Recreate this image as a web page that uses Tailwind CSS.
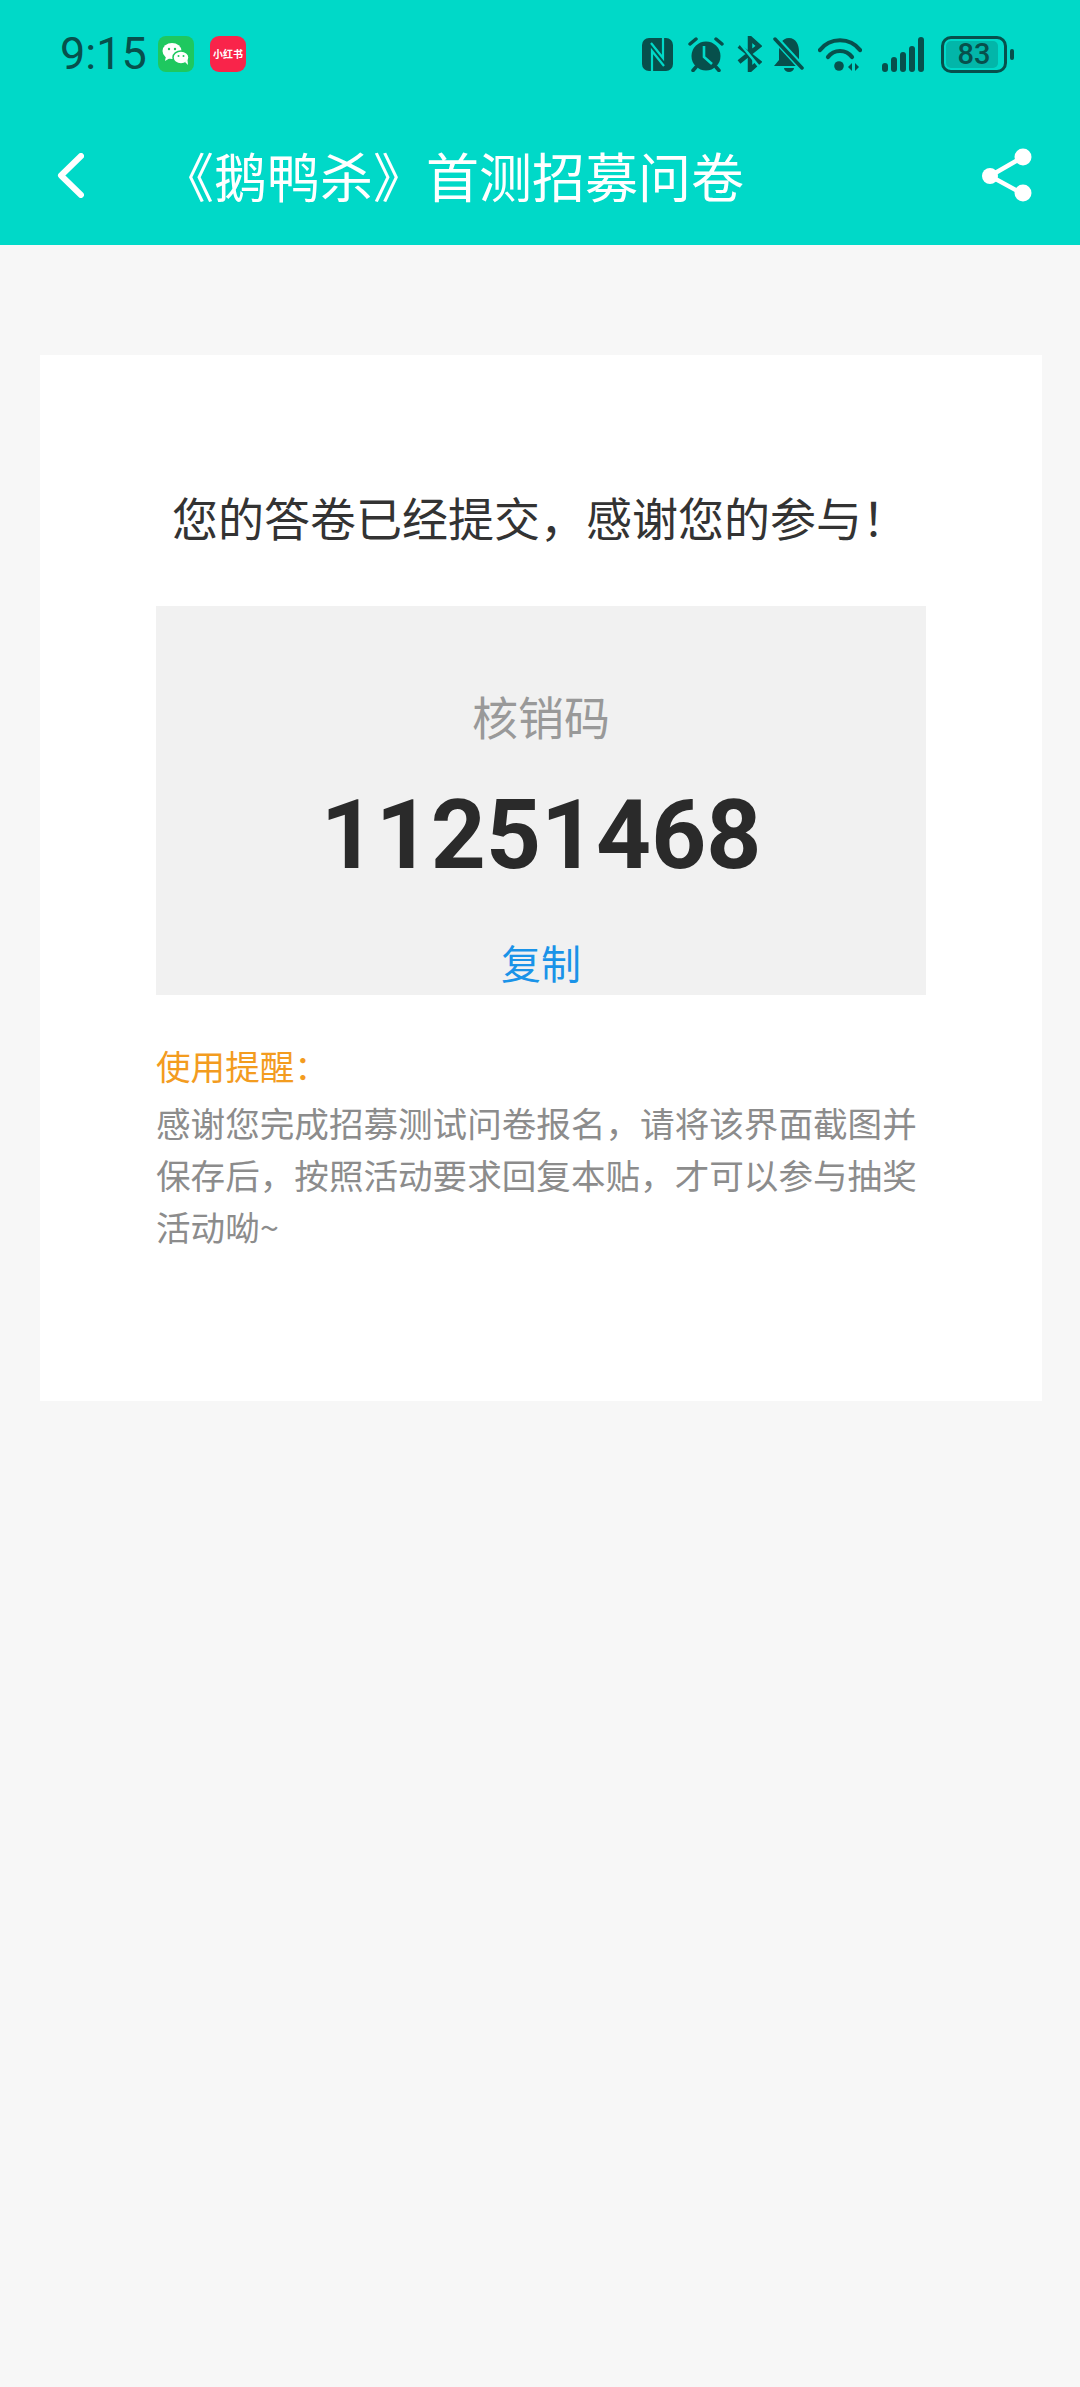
<!DOCTYPE html>
<html lang="zh-CN">
<head>
    <meta charset="UTF-8">
    <meta name="viewport" content="width=device-width, initial-scale=1.0">
    <title>《鹅鸭杀》首测招募问卷</title>
    <script src="https://cdn.jsdelivr.net/npm/@tailwindcss/browser@4"></script>
</head>
<body class="bg-[#f7f7f7] min-h-screen font-['Noto_Sans_CJK_SC','Noto_Sans',sans-serif]">
    <header class="bg-[#00d9c8] h-[245px]">
        <!-- status bar -->
        <div class="h-[108px] flex items-start justify-between pl-[60px] pr-[66px] pt-[36px] text-[#07504c]">
            <div class="flex items-center h-[36px]">
                <span class="font-['Roboto',sans-serif] text-[45px] leading-[36px] w-[98px]">9:15</span>
                <svg class="w-[36px] h-[36px]" viewBox="0 0 36 36">
                    <rect width="36" height="36" rx="8" fill="#1ec85f"/>
                    <ellipse cx="14" cy="15" rx="9.5" ry="8" fill="#fff"/>
                    <path d="M8 20l-1 5 5-3z" fill="#fff"/>
                    <ellipse cx="23" cy="21.5" rx="8" ry="6.5" fill="#fff" stroke="#1ec85f" stroke-width="1.5"/>
                    <path d="M27 26l3 3-.5-5z" fill="#fff"/>
                    <circle cx="11" cy="13" r="1.2" fill="#1ec85f"/>
                    <circle cx="17" cy="13" r="1.2" fill="#1ec85f"/>
                    <circle cx="20.5" cy="20" r="1" fill="#1ec85f"/>
                    <circle cx="25.5" cy="20" r="1" fill="#1ec85f"/>
                </svg>
                <div class="ml-[16px] w-[36px] h-[36px] rounded-[9px] bg-[#f9244a] flex items-center justify-center text-white text-[10px] font-bold leading-none whitespace-nowrap">小红书</div>
            </div>
            <div class="flex items-center h-[36px]">
                <!-- nfc -->
                <svg class="w-[31px] h-[33px]" viewBox="0 0 31 33" fill="none">
                    <rect width="31" height="33" rx="7" fill="#07504c"/>
                    <path d="M10 33V13l12 15" stroke="#00d9c8" stroke-width="2.2"/>
                    <path d="M21 0v20L9 5" stroke="#00d9c8" stroke-width="2.2"/>
                </svg>
                <!-- alarm -->
                <svg class="ml-[15px] w-[36px] h-[36px]" viewBox="0 0 36 36" fill="none">
                    <circle cx="18" cy="20" r="14.5" fill="#07504c"/>
                    <path d="M2 8l6-5M34 8l-6-5" stroke="#07504c" stroke-width="3.5" stroke-linecap="round"/>
                    <path d="M8 31l-3 3.5M28 31l3 3.5" stroke="#07504c" stroke-width="3.5" stroke-linecap="round"/>
                    <path d="M16 10v11l8 7" stroke="#00d9c8" stroke-width="2.6"/>
                </svg>
                <!-- bluetooth, muted -->
                <svg class="ml-[13px] w-[25px] h-[36px]" viewBox="0 0 25 36" fill="none">
                    <path d="M2 10l20 16-9 8V2l9 8L2 26" stroke="#07504c" stroke-width="4.5"/>
                    <path d="M1 5l23 28" stroke="#00d9c8" stroke-width="2.5"/>
                </svg>
                <!-- bell off -->
                <svg class="ml-[11px] w-[32px] h-[36px]" viewBox="0 0 32 36" fill="none">
                    <path d="M16 2C9 2 6 9 6 15V24L1 30H31L26 24V15C26 9 23 2 16 2Z" fill="#07504c"/>
                    <path d="M0 0L32 35" stroke="#00d9c8" stroke-width="7"/>
                    <path d="M2 3L29 32" stroke="#07504c" stroke-width="3.5" stroke-linecap="round"/>
                    <path d="M11 32a5 4 0 0 0 10 0z" fill="#07504c"/>
                </svg>
                <!-- wifi -->
                <svg class="ml-[13px] w-[44px] h-[35px]" viewBox="0 0 44 35" fill="none">
                    <path d="M2 13C12 0 32 0 42 13" stroke="#07504c" stroke-width="4.2" stroke-linecap="round"/>
                    <path d="M10 20C16 12 28 12 34 20" stroke="#07504c" stroke-width="4.2" stroke-linecap="round"/>
                    <circle cx="21" cy="29" r="4.8" fill="#07504c"/>
                    <path d="M34 26v8l-4-4zM37 26v8l4-4z" fill="#07504c"/>
                </svg>
                <!-- signal -->
                <div class="ml-[20px] mr-[2px] flex items-end gap-[3px] h-[35px]">
                    <span class="w-[6px] h-[9px] rounded-full bg-[#07504c]"></span>
                    <span class="w-[6px] h-[15px] rounded-full bg-[#07504c]"></span>
                    <span class="w-[6px] h-[20px] rounded-full bg-[#07504c]"></span>
                    <span class="w-[6px] h-[26px] rounded-full bg-[#07504c]"></span>
                    <span class="w-[6px] h-[35px] rounded-full bg-[#07504c]"></span>
                </div>
                <!-- battery -->
                <div class="ml-[15px] flex items-center">
                    <div class="relative w-[66px] h-[37px] rounded-[10px] border-[3px] border-[#07504c] p-[2px]">
                        <div class="h-full w-[52px] rounded-[5px] bg-[#07504c]/25"></div>
                        <span class="absolute inset-0 flex items-center justify-center font-['Roboto',sans-serif] font-medium text-[29px] leading-none">83</span>
                    </div>
                    <span class="ml-[3px] w-[4px] h-[11px] rounded-full bg-[#07504c]"></span>
                </div>
            </div>
        </div>
        <!-- nav bar -->
        <div class="h-[137px] flex items-center pl-[57px] pr-[48px] pb-[3px] text-white">
            <svg class="w-[27px] h-[45px] shrink-0" viewBox="0 0 27 45" fill="none">
                <path d="M24 3L4 22.5 24 42" stroke="#fff" stroke-width="6" stroke-linecap="round" stroke-linejoin="round"/>
            </svg>
            <h1 class="ml-[77px] text-[53px] leading-[70px] font-normal whitespace-nowrap flex-1">《鹅鸭杀》首测招募问卷</h1>
            <svg class="w-[50px] h-[54px] shrink-0" viewBox="0 0 50 54" fill="none">
                <path d="M41 9L8 28l33 18" stroke="#fff" stroke-width="4.5"/>
                <circle cx="41" cy="9" r="8.5" fill="#fff"/>
                <circle cx="8" cy="28" r="8" fill="#fff"/>
                <circle cx="41" cy="45" r="8.5" fill="#fff"/>
            </svg>
        </div>
    </header>

    <main class="mt-[110px] mx-[40px] w-[1002px] bg-white px-[116px] pt-[126px] pb-[149px]">
        <p class="pl-[16px] text-[46px] leading-[70px] text-[#333] whitespace-nowrap">您的答卷已经提交&#xFF0C;感谢您的参与&#xFF01;</p>

        <div class="mt-[55px] bg-[#f1f1f1] h-[389px] pt-[79px] flex flex-col items-center">
            <div class="text-[46px] leading-[60px] text-[#999]">核销码</div>
            <div class="mt-[35px] font-['Roboto',sans-serif] font-bold text-[96px] leading-[110px] text-[#2a2a2a]">11251468</div>
            <div class="mt-[42px] text-[40px] leading-[60px] text-[#1a93e8]">复制</div>
        </div>

        <div class="mt-[44px] text-[34.6px] leading-[52px] text-[#f39c1f]">使用提醒&#xFF1A;</div>
        <p class="mt-[5px] text-[34.6px] leading-[52px] text-[#8c8c8c]">感谢您完成招募测试问卷报名&#xFF0C;请将该界面截图并保存后&#xFF0C;按照活动要求回复本贴&#xFF0C;才可以参与抽奖活动呦~</p>
    </main>
</body>
</html>
